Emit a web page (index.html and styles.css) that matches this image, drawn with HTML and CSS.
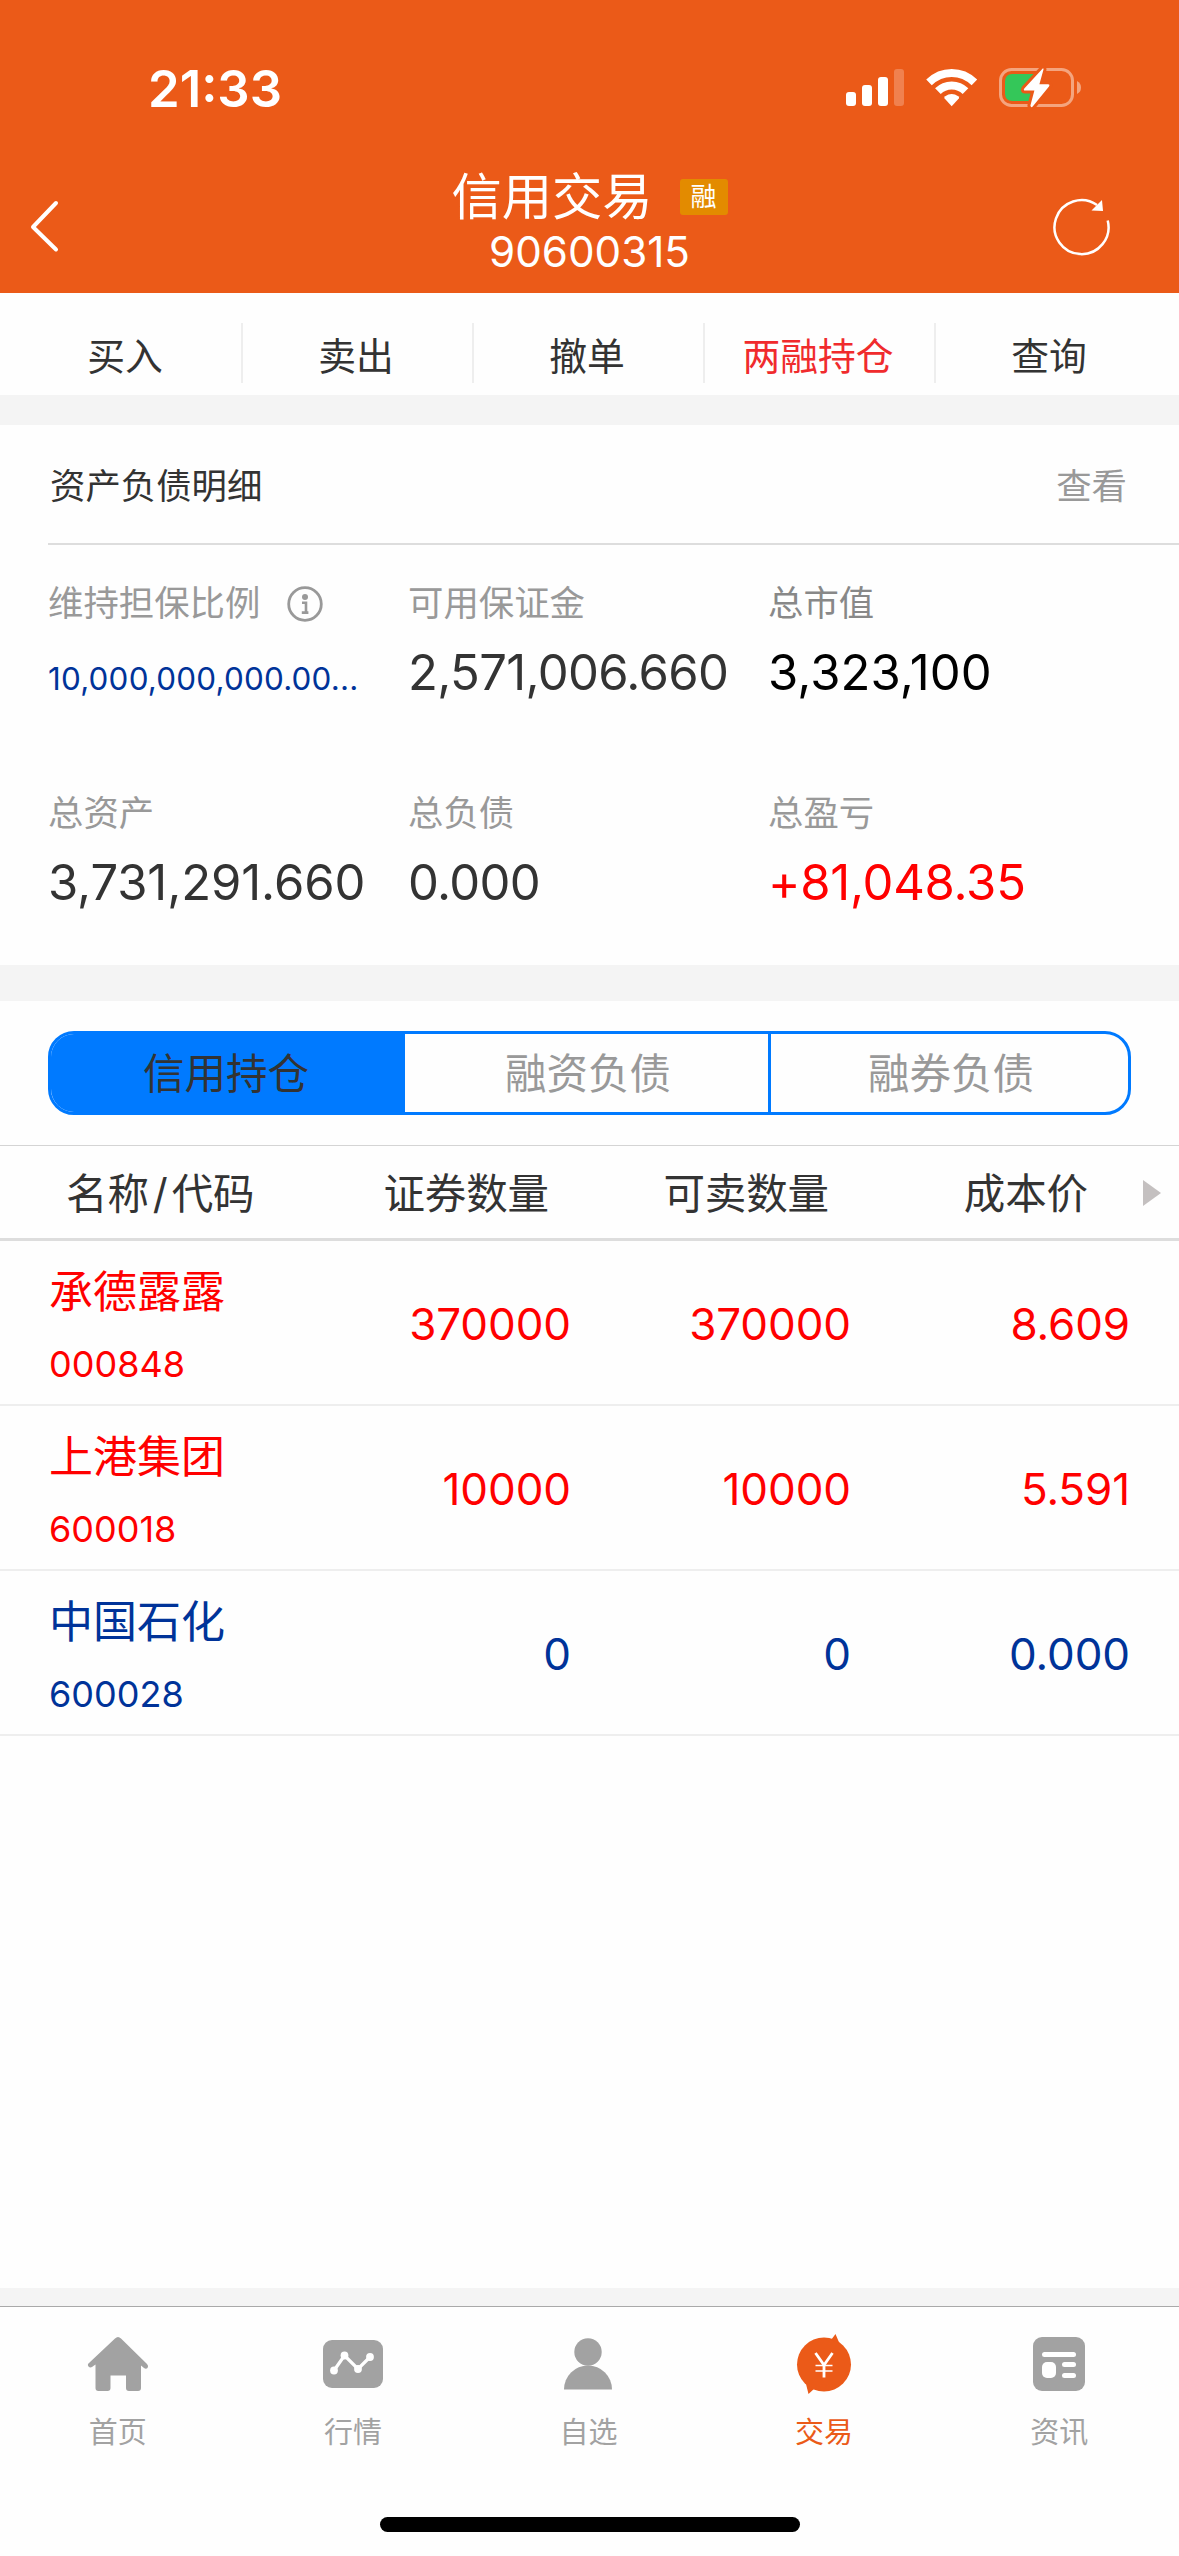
FILE: index.html
```html
<!DOCTYPE html>
<html lang="zh-CN">
<head>
<meta charset="utf-8">
<title>信用交易</title>
<link rel="stylesheet" href="styles.css">
</head>
<body>
<div class="screen">
  <header class="header">
    <div class="status">
      <span class="status-time">21:33</span>
      <svg class="status-icons" width="240" height="48" viewBox="845 64 240 48">
        <g fill="#fff">
          <rect x="846" y="92" width="10" height="14" rx="3"/>
          <rect x="862" y="85" width="10" height="21" rx="3"/>
          <rect x="878" y="77" width="10" height="29" rx="3"/>
          <rect x="894" y="69" width="10" height="37" rx="3" opacity=".24"/>
          <path d="M951.7 106.200 L944.600 98.500 Q943.700 97.200 945.200 96.200 Q951.700 92 958.200 96.200 Q959.700 97.200 958.800 98.500 Z"/>
        </g>
        <g fill="none" stroke="#fff" stroke-width="8">
          <path d="M929 82.300 C942 69.800 961.400 69.800 974.400 82.300"/>
          <path d="M937.900 91.100 C945.500 83.500 957.900 83.500 965.500 91.100"/>
        </g>
        <rect x="1000.500" y="69.500" width="72" height="36" rx="11" fill="none" stroke="#f4a47e" stroke-width="3"/>
        <path d="M1077 81 Q1081 83 1081 87.500 Q1081 92 1077 94 Z" fill="#f4a47e"/>
        <path d="M1012.500 74 H1034 V101 H1012.500 Q1005 101 1005 93.500 V81.500 Q1005 74 1012.500 74Z" fill="#34c759"/>
        <path d="M1042.700 68.500 L1024.300 88.600 Q1023 90.600 1025 90.600 H1034.400 L1030.400 105.600 Q1031 108.500 1032.700 106.600 L1049 86.400 Q1050.200 84.200 1048 84.200 H1039.400 L1043.500 69.500 Q1043.400 67.800 1042.700 68.500Z" fill="#fff" stroke="#eb5a18" stroke-width="6" paint-order="stroke" stroke-linejoin="round"/>
      </svg>
    </div>
    <div class="nav">
      <svg class="nav-back" width="32" height="56" viewBox="0 0 32 56"><path d="M27 4 L4 28 L27 50.500" fill="none" stroke="#fff" stroke-width="4" stroke-linecap="round" stroke-linejoin="round"/></svg>
      <div class="nav-center">
        <div class="nav-title"><span>信用交易</span><span class="badge">融</span></div>
        <div class="nav-account">90600315</div>
      </div>
      <svg class="nav-refresh" width="60" height="60" viewBox="0 0 60 60"><path d="M56.700 24.500 A27 27 0 1 1 46 9" fill="none" stroke="#fff" stroke-width="2.500"/><path d="M51 4 L52 15 L40.500 14.500Z" fill="#fff"/></svg>
    </div>
  </header>

  <nav class="menu">
    <span>买入</span><span>卖出</span><span>撤单</span><span class="active">两融持仓</span><span>查询</span>
  </nav>

  <section class="assets">
    <div class="assets-head"><h2>资产负债明细</h2><a>查看</a></div>
    <div class="assets-grid">
      <div class="stat"><span class="label">维持担保比例
        <svg class="info" width="36" height="36" viewBox="0 0 36 36"><circle cx="18" cy="18" r="16.300" fill="none" stroke="#999" stroke-width="2.800"/><circle cx="18" cy="11" r="3" fill="#999"/><path d="M15 16.700h4v9.300M14.800 26.600h6.600" fill="none" stroke="#999" stroke-width="2.600"/></svg></span>
        <span class="value small">10,000,000,000.00...</span></div>
      <div class="stat"><span class="label">可用保证金</span><span class="value tight">2,571,006.660</span></div>
      <div class="stat"><span class="label dark">总市值</span><span class="value black">3,323,100</span></div>
      <div class="stat"><span class="label">总资产</span><span class="value">3,731,291.660</span></div>
      <div class="stat"><span class="label">总负债</span><span class="value tight">0.000</span></div>
      <div class="stat"><span class="label">总盈亏</span><span class="value red">+81,048.35</span></div>
    </div>
  </section>

  <section class="holdings">
    <div class="segments"><span class="on">信用持仓</span><span>融资负债</span><span>融券负债</span></div>
    <div class="row thead">
      <span>名称<i>/</i>代码</span><span>证券数量</span><span>可卖数量</span><span>成本价</span>
      <svg class="more" width="18" height="26" viewBox="0 0 18 26"><path d="M0 0 L18 13 L0 26Z" fill="#c4c0c0"/></svg>
    </div>
    <div class="row up"><div class="stock"><b>承德露露</b><small>000848</small></div><span>370000</span><span>370000</span><span>8.609</span></div>
    <div class="row up"><div class="stock"><b>上港集团</b><small>600018</small></div><span>10000</span><span>10000</span><span>5.591</span></div>
    <div class="row flat"><div class="stock"><b>中国石化</b><small>600028</small></div><span>0</span><span>0</span><span>0.000</span></div>
  </section>

  <footer class="tabbar">
    <div class="tabs">
      <div class="tab"><svg width="64" height="64" viewBox="0 0 64 64"><path d="M29 6.500 Q32 3.500 35 6.500 L61 32 Q63 34 61.500 36 Q60 37.500 58 36 L55 33.500 V56 Q55 59 52 59 H43 Q40 59 40 56 V43.500 H24.500 V56 Q24.500 59 21.500 59 H12.500 Q9.500 59 9.500 56 V32.500 L6 35 Q4 36 2.500 34.500 Q1 32.500 3 31Z"/></svg>首页</div>
      <div class="tab"><svg width="64" height="64" viewBox="0 0 64 64"><rect x="2" y="8" width="60" height="48" rx="9"/><path d="M13 38.500 L23.500 23.500 L37 37 L49 25" fill="none" stroke="#fff" stroke-width="3.200"/><g fill="#fff"><circle cx="13" cy="38.500" r="3.900"/><circle cx="23.500" cy="23.500" r="3.900"/><circle cx="37" cy="37" r="3.900"/><circle cx="49" cy="25" r="3.900"/></g></svg>行情</div>
      <div class="tab"><svg width="64" height="64" viewBox="0 0 64 64"><circle cx="32" cy="20" r="13.700"/><path d="M8 57.500 A24 24 0 0 1 56 57.500Z"/></svg>自选</div>
      <div class="tab current"><svg width="64" height="64" viewBox="0 0 64 64"><circle cx="32" cy="32.500" r="27"/><path d="M39 8 L43.500 2 L47.500 11.500Z M14 52 L16.500 62 L23 56Z"/><path d="M23.500 21 L32 33 L40.500 21 M32 33 V45.500" fill="none" stroke="#fff" stroke-width="2.800"/><path d="M23.500 33.500 H40.500 M23.500 39 H40.500" fill="none" stroke="#fff" stroke-width="1.700"/></svg>交易</div>
      <div class="tab"><svg width="64" height="64" viewBox="0 0 64 64"><rect x="6" y="5" width="52" height="54" rx="9"/><g fill="#fff"><rect x="15" y="20" width="34" height="5" rx="2.500"/><rect x="15" y="30" width="14" height="16" rx="5"/><rect x="35" y="30" width="14" height="5" rx="2.500"/><rect x="35" y="41" width="14" height="5" rx="2.500"/></g></svg>资讯</div>
    </div>
    <div class="home-indicator"></div>
  </footer>
</div>
</body>
</html>
```
FILE: styles.css
```css
* { box-sizing: border-box; }
body {
  margin: 0;
  background: #fefefe;
  color: #333;
  font-family: Inter, "Noto Sans CJK SC", sans-serif;
}
.screen {
  width: 1179px;
  height: 2556px;
  display: flex;
  flex-direction: column;
  overflow: hidden;
}
svg { display: block; flex: none; }

/* header */
.header { height: 293px; background: #eb5a18; color: #fff; }
.status {
  height: 161px;
  padding: 64px 94px 0 148px;
  display: flex;
  justify-content: space-between;
}
.status-time { font-size: 50.800px; font-weight: 600; line-height: 49px; }
.nav {
  height: 132px;
  padding: 0 68px 0 29px;
  display: grid;
  grid-template-columns: 99px 1fr 60px;
}
.nav-back { margin-top: 38px; }
.nav-refresh { margin-top: 35px; }
.nav-center { display: flex; flex-direction: column; align-items: center; }
.nav-title {
  height: 66px;
  padding-top: 5px;
  display: flex;
  align-items: center;
  gap: 27px;
  font-size: 50.300px;
  line-height: 76px;
}
.badge {
  width: 48px;
  height: 36px;
  border-radius: 3px;
  background: #e38b00;
  font-size: 26px;
  line-height: 36px;
  text-align: center;
}
.nav-account { font-size: 42.200px; line-height: 50px; }

/* menu */
.menu {
  height: 132px;
  padding: 30px 12px 0 12px;
  border-bottom: 30px solid #f4f4f4;
  display: grid;
  grid-template-columns: repeat(5, 231px);
}
.menu span {
  height: 60px;
  padding-right: 3px;
  border-right: 2px solid #eee;
  font-size: 37.800px;
  line-height: 66px;
  text-align: center;
}
.menu span:last-child { border-right: 0; padding-right: 5px; }
.menu .active { color: #f02b2d; }

/* assets */
.assets { height: 576px; padding-left: 48px; border-bottom: 36px solid #f4f4f4; }
.assets-head {
  height: 120px;
  padding: 0 52px 0 2px;
  border-bottom: 2px solid #ddd;
  display: flex;
  justify-content: space-between;
  font-size: 35.400px;
  line-height: 123px;
}
.assets-head h2 { margin: 0; font: inherit; }
.assets-head a { color: #999; }
.assets-grid { display: grid; grid-template-columns: 360px 360px 1fr; grid-auto-rows: 210px; padding-top: 32px; }
.stat { display: flex; flex-direction: column; }
.label { height: 54px; display: flex; gap: 27px; align-items: center; font-size: 35.400px; line-height: 54px; color: #999; }
.label.dark { color: #888; }
.value { font-size: 49px; line-height: 84px; letter-spacing: -.1px; }
.value.tight { letter-spacing: -.650px; }
.value.small { font-size: 31.400px; line-height: 96px; letter-spacing: .200px; color: #039; }
.value.black { color: #000; letter-spacing: .1px; }
.value.red { color: #f00; letter-spacing: -.250px; }

/* holdings */
.holdings { flex: 1; padding-top: 30px; }
.segments {
  width: 1083px;
  height: 84px;
  margin: 0 0 30px 48px;
  border: 3px solid #007aff;
  border-radius: 26px;
  overflow: hidden;
  display: grid;
  grid-template-columns: 354px 363px 1fr;
  font-size: 41.500px;
  line-height: 80px;
  text-align: center;
  color: #999;
}
.segments span { padding-left: 3px; }
.segments span:last-child { border-left: 3px solid #007aff; }
.segments .on { padding: 0 4px 0 0; background: #007aff; color: #333; }
.row {
  height: 165px;
  padding: 0 49px 0 48px;
  border-bottom: 2px solid #eee;
  display: grid;
  grid-template-columns: 243px 280px 280px 279px;
  align-items: center;
  font-size: 44px;
  line-height: 60px;
}
.row > span { padding-top: 2px; text-align: right; letter-spacing: -.100px; }
.row.thead {
  height: 96px;
  padding: 2px 18px 0 66px;
  border-top: 1px solid #d4d4d4;
  border-bottom: 3px solid #ddd;
  grid-template-columns: 223px 260px 280px 259px 1fr;
  font-size: 41.500px;
}
.thead > span:first-child { text-align: left; }
.thead i { font-style: normal; padding: 0 4px; }
.more { justify-self: end; }
.stock { padding: 11px 0 0 1px; }
.stock b { display: block; font-weight: 400; font-size: 44px; line-height: 73px; }
.stock small { display: block; font-size: 36px; line-height: 71px; }
.up { color: #f00; }
.flat { color: #039; }

/* tab bar */
.tabbar { height: 268px; border-top: 18px solid #f4f4f4; }
.tabs { height: 204px; border-top: 1px solid #a9a9a9; padding: 25px 2px 0 0; display: grid; grid-template-columns: repeat(5, 1fr); }
.tab {
  display: flex;
  flex-direction: column;
  align-items: center;
  gap: 15px;
  font-size: 29px;
  line-height: 44px;
  color: #a2a2a2;
  fill: #a2a2a2;
}
.current { color: #eb5a18; fill: #eb5a18; }
.home-indicator { width: 420px; height: 15px; margin: 7px auto 0; border-radius: 8px; background: #000; }
```
